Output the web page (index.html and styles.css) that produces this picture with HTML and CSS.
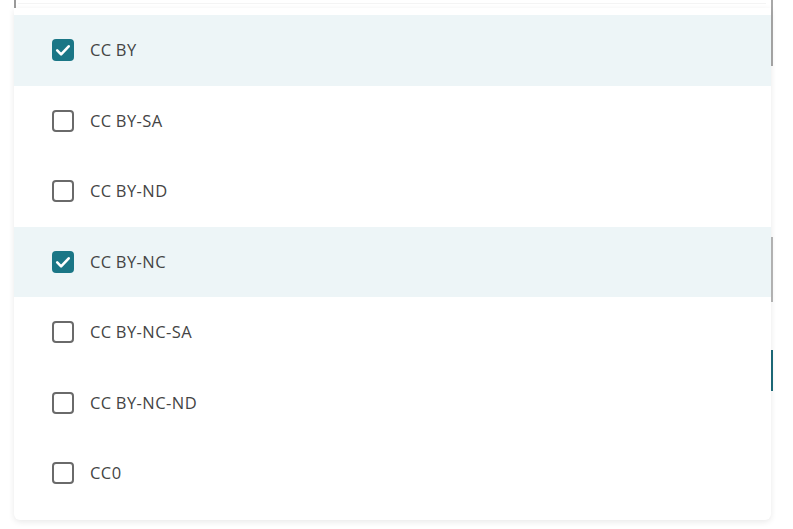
FILE: index.html
```html
<!DOCTYPE html>
<html lang="en">

<head>
    <meta charset="UTF-8">
    <meta name="viewport" content="width=device-width, initial-scale=1.0">
    <title>License Filter</title>
    <link rel="stylesheet" href="styles.css">
</head>

<body>
    <!-- page behind the dropdown -->
    <div class="backdrop">
        <div class="field-top"></div>
        <div class="edge edge-1"></div>
        <div class="edge edge-2"></div>
        <div class="edge edge-3"></div>
    </div>

    <div class="dropdown">
        <ul class="options">
            <li class="option selected">
                <span class="box checked">
                    <svg viewBox="0 0 22 22" width="22" height="22"><path d="M5.2 11.4l3.9 3.9 7.6-8" fill="none" stroke="#fff" stroke-width="2.6" stroke-linecap="round" stroke-linejoin="round"/></svg>
                </span>
                <span class="label">CC BY</span>
            </li>
            <li class="option">
                <span class="box"></span>
                <span class="label">CC BY-SA</span>
            </li>
            <li class="option">
                <span class="box"></span>
                <span class="label">CC BY-ND</span>
            </li>
            <li class="option selected">
                <span class="box checked">
                    <svg viewBox="0 0 22 22" width="22" height="22"><path d="M5.2 11.4l3.9 3.9 7.6-8" fill="none" stroke="#fff" stroke-width="2.6" stroke-linecap="round" stroke-linejoin="round"/></svg>
                </span>
                <span class="label">CC BY-NC</span>
            </li>
            <li class="option">
                <span class="box"></span>
                <span class="label">CC BY-NC-SA</span>
            </li>
            <li class="option">
                <span class="box"></span>
                <span class="label">CC BY-NC-ND</span>
            </li>
            <li class="option">
                <span class="box"></span>
                <span class="label">CC0</span>
            </li>
        </ul>
    </div>
</body>

</html>
```

FILE: styles.css
```css
/* General styles */
body {
    font-family: "Open Sans", "Noto Sans", Arial, sans-serif;
    background-color: #fff;
    margin: 0;
    padding: 0;
    width: 793px;
    height: 529px;
    overflow: hidden;
    position: relative;
}

/* Bits of the page peeking out behind the menu */
.field-top {
    position: absolute;
    left: 14px;
    top: 0;
    width: 752px;
    height: 8px;
    border-left: 2px solid #9a9a9a;
    box-sizing: border-box;
}

.field-top::after {
    content: "";
    position: absolute;
    left: 2px;
    right: 0;
    top: 3px;
    height: 1px;
    background: #f4f4f4;
}

.edge {
    position: absolute;
    left: 771px;
    width: 2px;
}

.edge-1 {
    top: 0;
    height: 66px;
    background: #a8a8a8;
}

.edge-2 {
    top: 237px;
    height: 65px;
    background: #b8b8b8;
}

.edge-3 {
    top: 350px;
    height: 41px;
    background: #1d6b7a;
}

/* Dropdown panel */
.dropdown {
    position: absolute;
    left: 14px;
    top: 8px;
    width: 757px;
    height: 512px;
    box-sizing: border-box;
    padding-top: 7px;
    background: #fff;
    border-radius: 0 0 6px 6px;
    box-shadow: 0px 2px 6px rgba(0, 0, 0, 0.09);
}

.options {
    list-style: none;
    margin: 0;
    padding: 0;
}

.option {
    height: 70.5px;
    display: flex;
    align-items: center;
    gap: 16px;
    padding-left: 38px;
    color: #444;
    font-size: 16.5px;
}

.option.selected {
    background-color: #edf5f7;
}

/* Checkboxes */
.box {
    width: 22px;
    height: 22px;
    box-sizing: border-box;
    border: 2px solid #6a6a6a;
    border-radius: 4px;
    flex-shrink: 0;
}

.box.checked {
    border: none;
    background-color: #1a7686;
}

.box svg {
    display: block;
}

.label {
    line-height: 22px;
    letter-spacing: 0.45px;
    word-spacing: -0.6px;
}
```
